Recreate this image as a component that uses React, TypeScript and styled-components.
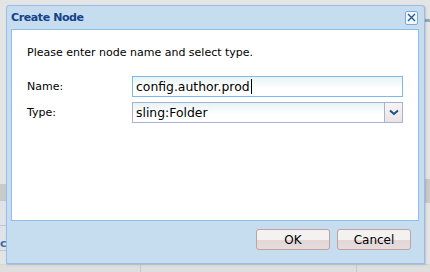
import React from 'react';
import styled, { createGlobalStyle } from 'styled-components';

const GlobalStyle = createGlobalStyle`
  html, body {
    margin: 0;
    padding: 0;
    background: #e4e4e4;
    font-family: 'DejaVu Sans', Tahoma, sans-serif;
    font-size: 11px;
    overflow: hidden;
  }
`;

const Page = styled.div`
  width: 430px;
  height: 272px;
  position: relative;
  display: flex;
  flex-direction: column;
  background: #e4e4e4;
`;

const Workspace = styled.div`
  flex: 1;
  display: flex;
  justify-content: space-between;
`;

const SidePanel = styled.div`
  width: 6px;
  display: flex;
  flex-direction: column;
  padding-top: 184px;
`;

const SideRow = styled.div<{ $dark?: boolean }>`
  height: ${(p) => (p.$dark ? 16 : 24)}px;
  background: ${(p) => (p.$dark ? '#c9c9c9' : '#dfe3e8')};
  border-bottom: 1px solid #b9c9db;
  color: #3a6ea5;
  font-weight: bold;
  overflow: hidden;
  display: flex;
  align-items: flex-end;
`;

const RightPanel = styled.div`
  width: 6px;
  display: flex;
  flex-direction: column;
  padding-top: 19px;
`;

const RightBar = styled.div`
  height: 3px;
  background: #8fa7bd;
  margin-bottom: 157px;
`;

const RightBlock = styled.div`
  height: 24px;
  background: #c9c9c9;
  border-left: 1px solid #d6dde5;
`;

const StatusBar = styled.div`
  height: 7px;
  background: #dedede;
  border-top: 1px solid #cfd6de;
  display: flex;
`;

const StatusCell = styled.div<{ $w: number }>`
  width: ${(p) => p.$w}px;
  border-right: 1px solid #c8c8c8;
`;

const Window = styled.div`
  position: absolute;
  left: 6px;
  top: 5px;
  width: 419px;
  height: 259px;
  box-sizing: border-box;
  border: 1px solid #99bbe8;
  border-radius: 3px 3px 0 0;
  background: #c6dcef;
  display: flex;
  flex-direction: column;
  box-shadow: 1px 1px 2px rgba(0, 0, 0, 0.15);
`;

const Header = styled.div`
  height: 23px;
  display: flex;
  align-items: center;
  justify-content: space-between;
  padding: 0 6px 0 4px;
`;

const Title = styled.span`
  color: #15428b;
  font-weight: bold;
  font-size: 11px;
  letter-spacing: -0.4px;
`;

const CloseButton = styled.div`
  width: 11px;
  height: 12px;
  border: 1px solid #7fa8d8;
  border-radius: 2px;
  background: #f4f8fc;
  display: flex;
  align-items: center;
  justify-content: center;
`;

const Body = styled.div`
  margin: 0 5px 0 4px;
  height: 192px;
  box-sizing: border-box;
  border: 1px solid #8dbfe6;
  background: #fff;
  padding: 16px 15px 0 15px;
`;

const Intro = styled.div`
  color: #000;
  margin-bottom: 17px;
`;

const Row = styled.div`
  display: flex;
  align-items: center;
  margin-bottom: 5px;
`;

const Label = styled.div`
  width: 105px;
  color: #000;
`;

const Field = styled.div<{ $focused?: boolean }>`
  flex: 1;
  height: 21px;
  box-sizing: border-box;
  border: 1px solid ${(p) => (p.$focused ? '#7eb9e8' : '#a6b3d6')};
  background: linear-gradient(#e6f3f3, #ffffff 60%);
  display: flex;
  align-items: center;
  padding-left: 3px;
  color: #000;
  font-size: 12.4px;
`;

const Caret = styled.span`
  display: inline-block;
  width: 1px;
  height: 15px;
  background: #000;
  margin-left: 1px;
`;

const Value = styled.span`
  flex: 1;
`;

const Trigger = styled.div`
  width: 17px;
  height: 19px;
  border-left: 1px solid #a6b3d6;
  background: linear-gradient(#f8f3f3, #ece4e4);
  display: flex;
  align-items: center;
  justify-content: center;
`;

const Footer = styled.div`
  flex: 1;
  display: flex;
  justify-content: flex-end;
  align-items: flex-start;
  gap: 7px;
  padding: 8px 13px 0 0;
`;

const Button = styled.div`
  width: 74px;
  height: 21px;
  box-sizing: border-box;
  border: 1px solid #c5a0a0;
  border-radius: 3px;
  background: linear-gradient(#f4f1f1 0%, #f4f1f1 50%, #e3d6d6 51%, #e6dcdc 100%);
  display: flex;
  align-items: center;
  justify-content: center;
  color: #000;
  font-size: 12px;
`;

const App = () => (
  <Page>
    <GlobalStyle />
    <Workspace>
      <SidePanel>
        <SideRow $dark />
        <SideRow />
        <SideRow>c</SideRow>
      </SidePanel>
      <RightPanel>
        <RightBar />
        <RightBlock />
      </RightPanel>
    </Workspace>
    <StatusBar>
      <StatusCell $w={140} />
      <StatusCell $w={215} />
    </StatusBar>
    <Window>
      <Header>
        <Title>Create Node</Title>
        <CloseButton>
          <svg width="9" height="9" viewBox="0 0 9 9">
            <path d="M1 1L8 8M8 1L1 8" stroke="#1f5aa8" strokeWidth="1.4" />
          </svg>
        </CloseButton>
      </Header>
      <Body>
        <Intro>Please enter node name and select type.</Intro>
        <Row>
          <Label>Name:</Label>
          <Field $focused>
            config.author.prod
            <Caret />
          </Field>
        </Row>
        <Row>
          <Label>Type:</Label>
          <Field>
            <Value>sling:Folder</Value>
            <Trigger>
              <svg width="10" height="7" viewBox="0 0 10 7">
                <path d="M1 1.5L5 5L9 1.5" stroke="#1f4f8f" strokeWidth="2" fill="none" />
              </svg>
            </Trigger>
          </Field>
        </Row>
      </Body>
      <Footer>
        <Button>OK</Button>
        <Button>Cancel</Button>
      </Footer>
    </Window>
  </Page>
);

export default App;
